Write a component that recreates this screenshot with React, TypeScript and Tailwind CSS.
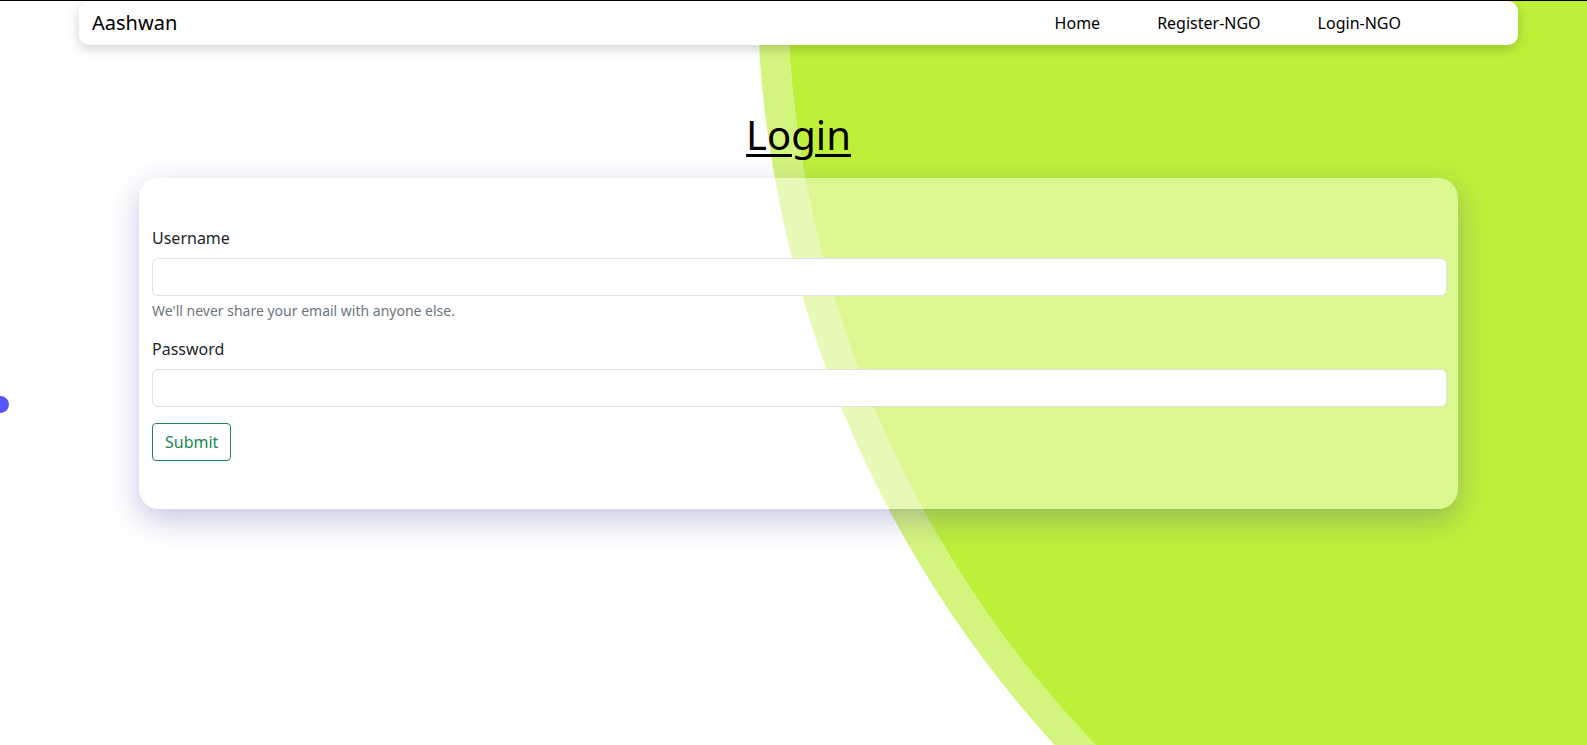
import React from 'react';

export default function App() {
  const links = ['Home', 'Register-NGO', 'Login-NGO'];

  return (
    <div className="relative h-screen overflow-hidden bg-white border-t border-black font-['Noto_Sans',sans-serif] text-[#212529]">
      {/* big lime circle in the background */}
      <div className="absolute left-[757px] top-[-1160px] w-[2274px] h-[2274px] rounded-full bg-[#bef03a] bg-clip-padding border-[30px] border-[rgba(190,240,58,0.66)]" />

      {/* little blue blob on the left edge */}
      <div className="absolute left-[-11px] top-[395px] w-[20px] h-[17px] rounded-full bg-[#5656ff]" />

      {/* Navbar */}
      <nav className="relative z-10 ml-[79px] mr-[69px] h-[44px] bg-white rounded-[10px] shadow-[0_4px_12px_rgba(0,0,0,0.18)] flex items-center pl-[13px]">
        <span className="text-[20px] text-black">Aashwan</span>
        <div className="ml-auto mr-[117px] flex items-center gap-[57px]">
          {links.map((l) => (
            <a key={l} href="#" className="text-[16px] text-black">
              {l}
            </a>
          ))}
        </div>
      </nav>

      <div className="relative z-10 ml-[139px] mr-[129px]">
        <h1 className="mt-[66px] mb-[19px] text-center text-[40px] leading-[1.2] text-black underline underline-offset-[4px] decoration-[3px]">
          Login
        </h1>

        <form className="bg-white/45 rounded-[20px] shadow-[0_10px_30px_rgba(60,60,160,0.3)] pt-[48px] pb-[48px] pl-[13px] pr-[11px]">
          <label className="block text-[16px] leading-[24px] mb-2">Username</label>
          <input
            type="text"
            className="block w-full h-[38px] bg-white border border-[#dee2e6] rounded-[6px] px-3"
          />
          <p className="mt-1 text-[14px] leading-[21px] text-[#6c757d]">
            We'll never share your email with anyone else.
          </p>

          <label className="block mt-4 text-[16px] leading-[24px] mb-2">Password</label>
          <input
            type="password"
            className="block w-full h-[38px] bg-white border border-[#dee2e6] rounded-[6px] px-3"
          />

          <button
            type="button"
            className="mt-4 border border-[#198754] text-[#198754] rounded-[4px] px-3 h-[38px] text-[16px]"
          >
            Submit
          </button>
        </form>
      </div>
    </div>
  );
}
